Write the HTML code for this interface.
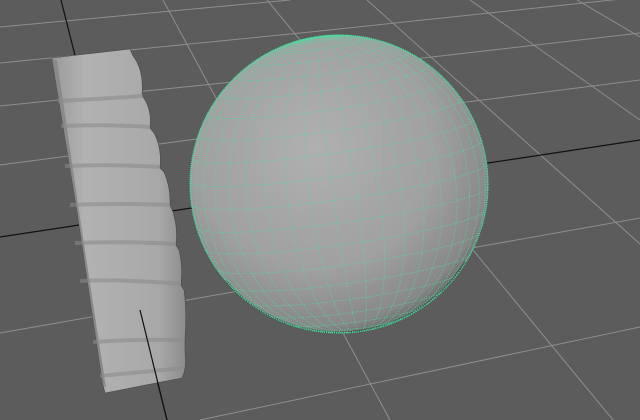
<!DOCTYPE html>
<html><head><meta charset="utf-8"><style>
html,body{margin:0;padding:0;width:640px;height:420px;overflow:hidden;background:#5c5c5c}
svg{display:block}
</style></head><body>
<svg id="s" width="640" height="420" viewBox="0 0 640 420" xmlns="http://www.w3.org/2000/svg">
<defs>
<radialGradient id="sg" cx="0.42" cy="0.38" r="0.68">
<stop offset="0" stop-color="#b0b0b0"/>
<stop offset="0.6" stop-color="#a0a0a0"/>
<stop offset="0.88" stop-color="#888"/>
<stop offset="1" stop-color="#555"/>
</radialGradient>
<linearGradient id="gg" x1="0" y1="0" x2="1" y2="0">
<stop offset="0" stop-color="#9a9a9a"/>
<stop offset="0.25" stop-color="#b2b2b2"/>
<stop offset="0.8" stop-color="#a8a8a8"/>
<stop offset="1" stop-color="#8c8c8c"/>
</linearGradient>
</defs>
<rect width="640" height="420" fill="#5c5c5c"/>
<g stroke="#8e8e8e" stroke-width="1" fill="none">
<polyline points="0,27 290,0"/>
<polyline points="0,63 320,31 640,-3"/>
<polyline points="0,106 233,82 423,58 640,33"/>
<polyline points="0,165 197,139 467,102 640,80"/>
<polyline points="0,333 233,292 477,247 640,218"/>
<polyline points="200,420 640,327"/>
<line x1="163" y1="0" x2="390" y2="420"/>
<line x1="267" y1="0" x2="613" y2="420"/>
<line x1="367" y1="0" x2="640" y2="244"/>
<line x1="470" y1="0" x2="640" y2="120"/>
<line x1="577" y1="0" x2="640" y2="37"/>
</g>
<g stroke="#111" stroke-width="1.2" fill="none">
<polyline points="0,237 488,163 640,140"/>
<line x1="61" y1="0" x2="167" y2="420"/>
</g>
<path d="M52,58 L130,49 L133,56 Q144,70 142,95 L145,100 Q152,112 150,128 L154,133 Q162,148 160,168 L164,172 Q171,188 170,205 L173,212 Q178,228 176,245 L179,250 Q183,266 181,285 L184,290 Q187,312 185,340 L185,352 Q187,368 182,378 L105,393 L103,385 L77,210 Z" fill="url(#gg)" stroke="#4a4a4a" stroke-width="0.6"/>
<path d="M52,58 L57,60 L80,218 L106,388 L103,385 L77,210 Z" fill="#8a8a8a"/>
<g stroke="#8a8a8a" stroke-width="4" fill="none" opacity="0.55">
<path d="M58,101 Q100,99 143,96"/>
<path d="M61,126 Q105,124 150,127"/>
<path d="M65,166 Q110,164 160,167"/>
<path d="M70,205 Q115,203 170,205"/>
<path d="M75,243 Q120,241 176,244"/>
<path d="M80,281 Q125,279 181,284"/>
<path d="M93,342 Q135,339 184,340"/>
<path d="M100,376 Q140,372 184,368"/>
</g>
<line x1="140" y1="310" x2="167" y2="420" stroke="#111" stroke-width="1.2"/>
<circle cx="339" cy="184" r="149" fill="url(#sg)"/>
<path d="M225,280 A149,149 0 0 0 465,262" stroke="#2a2a2a" stroke-width="2" fill="none" opacity="0.5"/>
<g id="wf" stroke="#4fdca0" stroke-width="0.8" fill="none" stroke-dasharray="1.2 1.4" opacity="0.85"></g>
<circle cx="339" cy="184" r="149" fill="none" stroke="#3fe09a" stroke-width="1.3" stroke-dasharray="1 1"/>
</svg>
<script>
(function(){
var cx=339,cy=184,r=149,a=6*Math.PI/180,b=8*Math.PI/180,g=document.getElementById('wf'),out='';
function P(phi,th){var x=Math.cos(phi)*Math.cos(th),y=Math.sin(phi),z=Math.cos(phi)*Math.sin(th);
var y2=y*Math.cos(a)-z*Math.sin(a),z2=y*Math.sin(a)+z*Math.cos(a);
var x3=x*Math.cos(b)-y2*Math.sin(b),y3=x*Math.sin(b)+y2*Math.cos(b);
return [cx+r*x3,cy-r*y3,z2];}
function curve(f,n){var d='',on=false;for(var i=0;i<=n;i++){var p=f(i/n);if(p[2]>0){d+=(on?'L':'M')+p[0].toFixed(1)+','+p[1].toFixed(1);on=true;}else on=false;}return d;}
for(var k=-9;k<=9;k++){var phi=k*Math.PI/20;out+='<path d="'+curve(function(t){return P(phi,t*2*Math.PI)},160)+'"/>';}
for(var k=0;k<40;k++){var th=k*Math.PI/20+0.05;out+='<path d="'+curve(function(t){return P(-Math.PI/2+t*Math.PI,th)},100)+'"/>';}
g.innerHTML=out;
})();
</script>
</body></html>
